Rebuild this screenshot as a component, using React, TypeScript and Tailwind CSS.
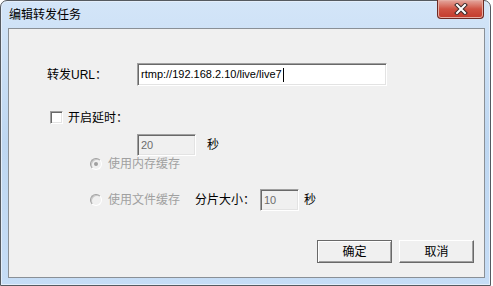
import React from 'react';

const font = { fontFamily: '"Liberation Sans", "Noto Sans CJK SC", sans-serif' };

const Sunken = ({ value, disabled, className }: { value: string; disabled?: boolean; className: string }) => (
  <div
    className={`flex items-center border border-t-[#a0a0a0] border-l-[#a0a0a0] border-r-white border-b-white shadow-[inset_1px_1px_0_#696969,inset_-1px_-1px_0_#e3e3e3] pl-[3px] text-[11px] leading-none ${disabled ? 'bg-[#f0f0f0] text-[#6d6d6d]' : 'bg-white text-black'} ${className}`}
  >
    <span>{value}</span>
    {!disabled && <span className="ml-[1px] inline-block w-[1px] h-[14px] bg-black"></span>}
  </div>
);

const Radio = ({ checked }: { checked?: boolean }) => (
  <div className="w-[12px] h-[12px] rounded-full border border-t-[#a0a0a0] border-l-[#a0a0a0] border-r-white border-b-white shadow-[inset_1px_1px_0_#c8c8c8] bg-[#f0f0f0] flex items-center justify-center">
    {checked && <div className="w-[4px] h-[4px] rounded-full bg-[#a0a0a0]"></div>}
  </div>
);

const Button = ({ label, isDefault }: { label: string; isDefault?: boolean }) => (
  <button
    className={`w-[75px] h-[23px] bg-[#f0f0f0] text-[12px] text-black flex items-center justify-center border ${isDefault ? 'border-[#696969] shadow-[inset_1px_1px_0_#ffffff,inset_-1px_-1px_0_#a0a0a0]' : 'border-t-white border-l-white border-r-[#696969] border-b-[#696969] shadow-[inset_-1px_-1px_0_#a0a0a0]'}`}
  >
    {label}
  </button>
);

export default function App() {
  return (
    <div className="w-[493px] h-[286px] bg-white" style={font}>
      <div className="w-[491px] h-[286px] flex flex-col border border-[#555a60] rounded-t-[7px] bg-gradient-to-b from-[#d3e5f8] via-[#bed7f1] to-[#c6ddf6] shadow-[inset_0_0_0_1px_#e4eefa]">
        <div className="h-[27px] flex items-start">
          <div className="pl-[8px] pt-[6px] text-[12px] leading-[16px] text-black">编辑转发任务</div>
          <div className="ml-auto mr-[6px] w-[47px] h-[19px] -mt-[1px] rounded-b-[4px] border border-[#6e2a24] border-t-0 bg-gradient-to-b from-[#e3a79f] via-[#cf5243] to-[#c23a2b] flex items-center justify-center shadow-[inset_0_0_0_1px_#e6aca2]">
            <svg width="14" height="12" viewBox="0 0 14 12">
              <path d="M3 2 L11 10 M11 2 L3 10" stroke="#3b2a2a" strokeWidth="4" strokeLinecap="square" />
              <path d="M3 2 L11 10 M11 2 L3 10" stroke="#ffffff" strokeWidth="2" strokeLinecap="square" />
            </svg>
          </div>
        </div>
        <div className="ml-[7px] mr-[5px] h-[250px] border border-[#8a9096] bg-[#f0f0f0] flex flex-col text-[12px] text-black">
          <div className="mt-[34px] h-[23px] flex items-center">
            <span className="ml-[38px] w-[90px]">转发URL：</span>
            <Sunken value="rtmp://192.168.2.10/live/live7" className="w-[250px] h-[23px]" />
          </div>
          <div className="mt-[25px] h-[13px] flex items-center">
            <div className="ml-[41px] w-[13px] h-[13px] border border-t-[#a0a0a0] border-l-[#a0a0a0] border-r-white border-b-white shadow-[inset_1px_1px_0_#696969,inset_-1px_-1px_0_#e3e3e3] bg-white"></div>
            <span className="ml-[5px]">开启延时：</span>
          </div>
          <div className="mt-[10px] h-[22px] flex items-center">
            <Sunken value="20" disabled className="ml-[128px] w-[59px] h-[22px]" />
            <span className="ml-[11px]">秒</span>
          </div>
          <div className="mt-[2px] h-[12px] flex items-center">
            <div className="ml-[81px]"><Radio checked /></div>
            <span className="ml-[6px] text-[#a0a0a0]">使用内存缓存</span>
          </div>
          <div className="mt-[19px] h-[22px] flex items-center">
            <div className="ml-[81px]"><Radio /></div>
            <span className="ml-[6px] w-[72px] text-[#a0a0a0]">使用文件缓存</span>
            <span className="ml-[15px] w-[65px]">分片大小：</span>
            <Sunken value="10" disabled className="w-[39px] h-[22px]" />
            <span className="ml-[5px]">秒</span>
          </div>
          <div className="mt-[29px] flex justify-end gap-[7px] pr-[10px]">
            <Button label="确定" isDefault />
            <Button label="取消" />
          </div>
        </div>
      </div>
    </div>
  );
}
